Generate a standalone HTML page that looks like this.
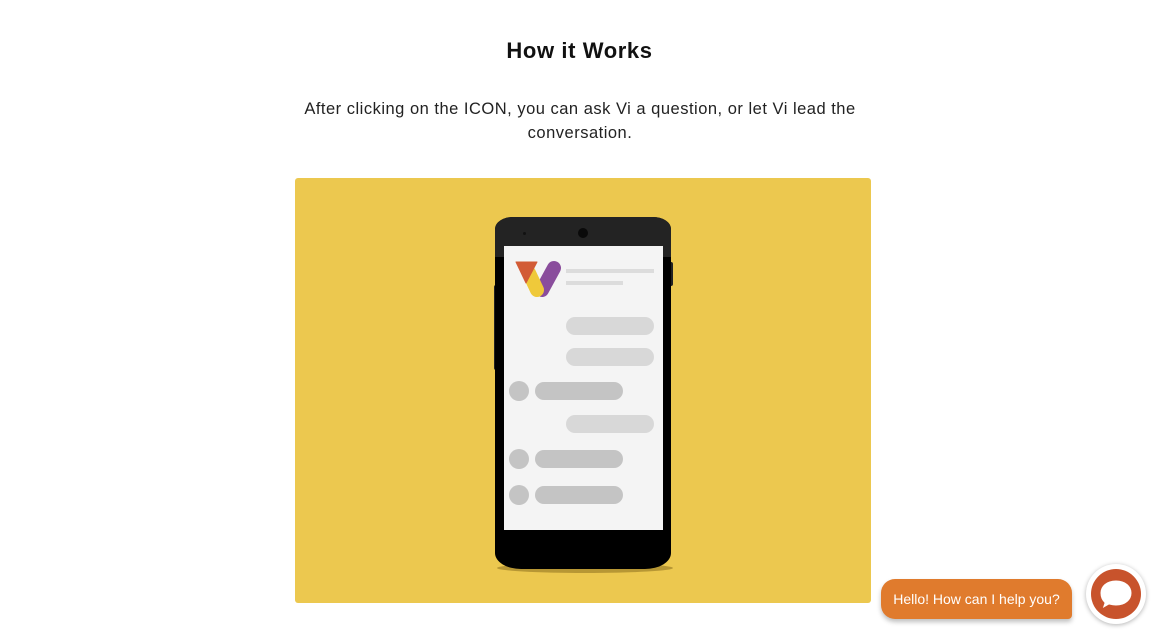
<!DOCTYPE html>
<html><head><style>
body{margin:0;width:1159px;height:642px;background:#fff;position:relative;overflow:hidden;font-family:"Liberation Sans",sans-serif}
.a{position:absolute}
h2{position:absolute;top:38px;left:0;width:1159px;text-align:center;margin:0;font-size:22px;font-weight:bold;color:#111;letter-spacing:.6px}
p{position:absolute;top:97px;left:270px;width:620px;text-align:center;margin:0;font-size:16.5px;line-height:24px;color:#222;letter-spacing:.5px}
.r{background:#d8d8d8;border-radius:9px;height:18px;width:88px;left:566px}
.l{background:#c4c4c4;border-radius:9px;height:18px;width:88px;left:535px}
.c{background:#c4c4c4;border-radius:50%;width:20px;height:20px;left:509px}
</style></head><body>
<h2>How it Works</h2>
<p>After clicking on the ICON, you can ask Vi a question, or let Vi lead the<br>conversation.</p>
<div class="a" style="left:295px;top:178px;width:576px;height:425px;background:#ecc84f;border-radius:3px"></div>
<div class="a" style="left:497px;top:563px;width:176px;height:10px;border-radius:50%;background:rgba(120,90,20,.45)"></div>
<div class="a" style="left:494px;top:285px;width:4px;height:85px;background:#222;border-radius:2px"></div>
<div class="a" style="left:669px;top:262px;width:4px;height:24px;background:#222;border-radius:2px"></div>
<div class="a" style="left:495px;top:217px;width:176px;height:352px;background:#000;border-radius:18px 18px 26px 26px/12px 12px 16px 16px"></div>
<div class="a" style="left:495px;top:217px;width:176px;height:40px;background:#232323;border-radius:18px 18px 0 0/12px 12px 0 0"></div>
<div class="a" style="left:578px;top:228px;width:10px;height:10px;border-radius:50%;background:#0a0a0a"></div>
<div class="a" style="left:523px;top:232px;width:3px;height:3px;border-radius:50%;background:#111"></div>
<div class="a" style="left:504px;top:246px;width:159px;height:284px;background:#f4f4f4"></div>
<svg class="a" style="left:504px;top:246px" width="70" height="60" viewBox="504 246 70 60">
<line x1="554" y1="268" x2="542" y2="290" stroke="#8a4d9c" stroke-width="14" stroke-linecap="round"/>
<line x1="529" y1="273" x2="537" y2="290" stroke="#efc93a" stroke-width="14" stroke-linecap="round"/>
<path d="M516 262 L537 262 L526 283 Z" fill="#d25b35" stroke="#d25b35" stroke-width="1" stroke-linejoin="round"/>
</svg>
<div class="a" style="left:566px;top:269px;width:88px;height:4px;background:#dcdcdc"></div>
<div class="a" style="left:566px;top:281px;width:57px;height:4px;background:#dcdcdc"></div>
<div class="a r" style="top:317px"></div>
<div class="a r" style="top:348px"></div>
<div class="a c" style="top:381px"></div><div class="a l" style="top:382px"></div>
<div class="a r" style="top:415px"></div>
<div class="a c" style="top:449px"></div><div class="a l" style="top:450px"></div>
<div class="a c" style="top:485px"></div><div class="a l" style="top:486px"></div>
<div class="a" style="left:881px;top:579px;width:191px;height:40px;background:#e07b2d;border-radius:14px 14px 4px 14px;box-shadow:0 3px 5px rgba(0,0,0,.25);color:#fff;font-size:14px;line-height:40px;text-align:center">Hello! How can I help you?</div>
<div class="a" style="left:1086px;top:564px;width:60px;height:60px;border-radius:50%;background:#fff;box-shadow:0 1px 5px rgba(0,0,0,.3)"></div>
<div class="a" style="left:1091px;top:569px;width:50px;height:50px;border-radius:50%;background:#c8532c"></div>
<svg class="a" style="left:1096px;top:576px" width="40" height="38" viewBox="0 0 40 38">
<path d="M20 4 C30 4 36 10 36 17 C36 24 30 30 20 30 C17 30 15 29.5 13 29 L6 33 L8 27 C5 24 4 21 4 17 C4 10 10 4 20 4 Z" fill="#fff" stroke="#c8532c" stroke-width="1"/>
</svg>
</body></html>
